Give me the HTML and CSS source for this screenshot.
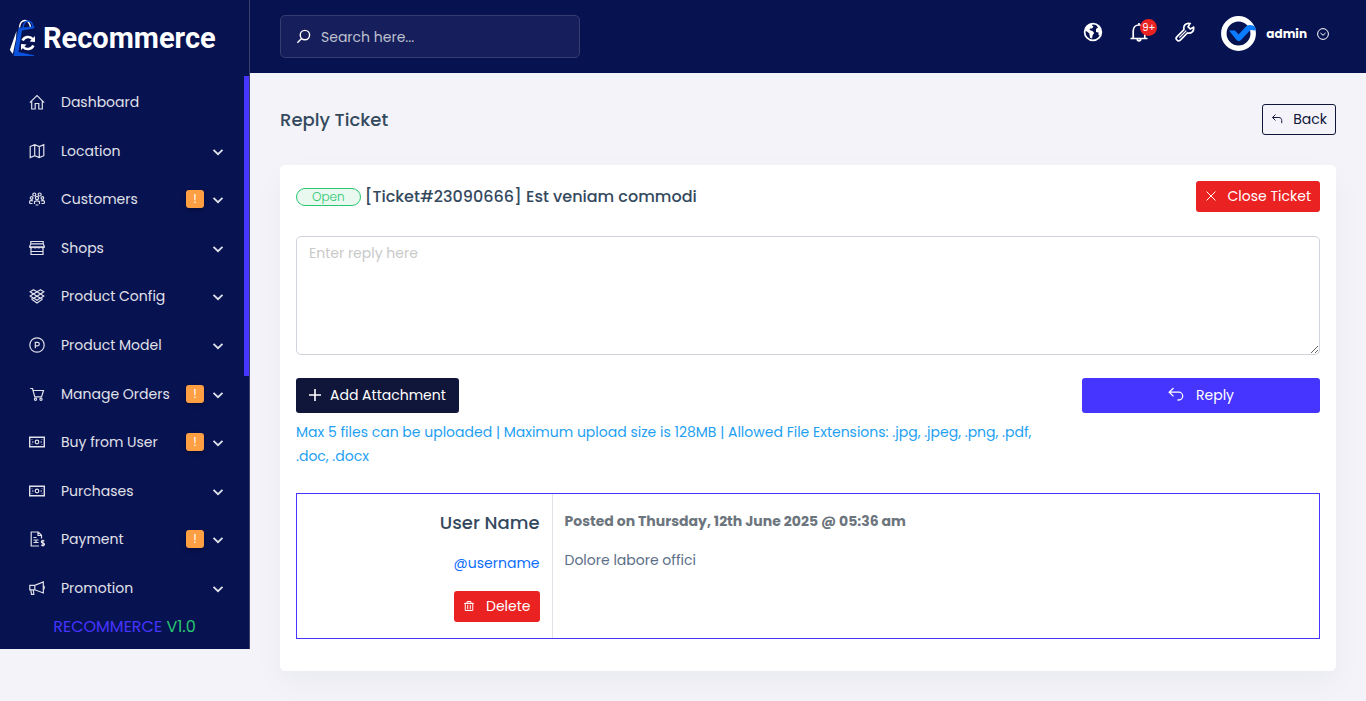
FILE: index.html
```html
<!DOCTYPE html>
<html lang="en">
<head>
    <meta charset="UTF-8">
    <meta name="viewport" content="width=device-width, initial-scale=1.0">
    <title>Recommerce - Reply Ticket</title>
    <link rel="stylesheet" href="styles.css">
</head>
<body>
    <!-- shared icons -->
    <svg class="sprite" aria-hidden="true">
        <symbol id="chevron" viewBox="0 0 12 12"><path d="M1.500 4.800 6 9.200l4.500-4.400" stroke-width="1.800"/></symbol>
        <symbol id="money" viewBox="0 0 16 16"><path d="M.7 3.200h14.600v9.600H.7z" stroke-width="1.400"/><circle cx="8" cy="8" r="1.800"/><path d="M3 5.500v-.6M3 11v-.6M13 5.500v-.6M13 11v-.6M3 8h1.500M11.500 8H13"/></symbol>
        <symbol id="reply" viewBox="0 0 16 16"><path d="M5.500 1 1.200 5.200l4.300 4.200M1.400 5.200h9.400a3.900 3.900 0 0 1 0 7.800H9.500" stroke-width="1.300"/></symbol>
    </svg>

    <div class="page-wrapper">
        <aside class="sidebar">
            <a href="#" class="sidebar-logo">
                <svg width="28" height="38" viewBox="0 0 28 38">
                    <path d="M7.500 12 .8 31l3 4L7 20z" fill="#fff"/>
                    <path d="M10.500 8.500C11 3.500 13.500 1.500 16 1.500s4.500 2 5.500 6.500" fill="none" stroke="#fff" stroke-width="1.400"/>
                    <path d="M14 9c.5-5 2.500-7 5-7s4.500 2 5 6" fill="none" stroke="#0b4fd8" stroke-width="1.500"/>
                    <path d="m9.500 9 16.500-1.800-1.500 2.300L13 11.500 9.500 33 25 36.300v.7H4.500z" fill="#0b52dc"/>
                    <path d="M13.600 21.500c1.800-4 7.400-4.800 10-1.500M24.400 26.500c-1.800 4-7.400 4.800-10 1.500" fill="none" stroke="#fff" stroke-width="2.600"/>
                    <path d="m20.500 22.500 5.500.5v-6zM17.500 25.500 12 25v6z" fill="#fff"/>
                </svg>
                <span>Recommerce</span>
            </a>

            <nav class="sidebar-menu">
                <ul>
                    <li><a href="#" class="menu-link">
                        <svg class="icon" viewBox="0 0 16 16"><path d="M.8 8.700 8 1.500l7.200 7.200M2.700 7v8h3.500V9.500h3.600V15h3.500V7"/></svg>
                        <span>Dashboard</span>
                    </a></li>
                    <li><button class="menu-link">
                        <svg class="icon" viewBox="0 0 16 16"><path d="m1.200 3.500 4.500-1.800 4.600 1.800 4.500-1.800v11l-4.500 1.800-4.600-1.800-4.500 1.800zM5.700 1.700v11M10.300 3.500v11"/></svg>
                        <span>Location</span>
                        <svg class="arrow"><use href="#chevron"/></svg>
                    </button></li>
                    <li><button class="menu-link">
                        <svg class="icon" viewBox="0 0 16 16"><circle cx="5.300" cy="3.500" r="1.500"/><circle cx="10.700" cy="3.500" r="1.500"/><circle cx="8" cy="7" r="1.600"/><circle cx="2.600" cy="7" r="1.300"/><circle cx="13.400" cy="7" r="1.300"/><path d="M5.500 13v-2c0-1.600 5-1.600 5 0v2M6.500 14h3M.6 12.500v-1.700c0-1.200 2-1.600 3.500-.8M15.400 12.500v-1.700c0-1.200-2-1.600-3.500-.8M.8 12.500h2.700M12.500 12.500h2.700"/></svg>
                        <span>Customers</span>
                        <span class="menu-badge">!</span>
                        <svg class="arrow"><use href="#chevron"/></svg>
                    </button></li>
                    <li><button class="menu-link">
                        <svg class="icon" viewBox="0 0 16 16"><path d="M1.800 1.500h12.400v2.300H1.800zM1.800 3.800.5 6.800h15l-1.300-3M.5 6.800c1 1.500 2 1.500 3.700.3 1.500 1.200 2.500 1.200 3.800 0 1.300 1.200 2.300 1.200 3.800 0 1.700 1.200 2.700 1.200 3.700-.3M2 8.500v6h12v-6M2 11.500h12"/></svg>
                        <span>Shops</span>
                        <svg class="arrow"><use href="#chevron"/></svg>
                    </button></li>
                    <li><button class="menu-link">
                        <svg class="icon" viewBox="0 0 16 16"><path d="m4.500 1.800 3.500 2-3.500 2.200-3.300-2.200zM11.500 1.800 8 3.800 11.500 6l3.300-2.200zM4.500 6 8 8.200 4.500 10.300 1.200 8zM11.500 6 8 8.200l3.500 2.100L14.800 8zM3 10.300v1.200l5 3.500 5-3.500v-1.200M5 10.300l3 2 3-2"/></svg>
                        <span>Product Config</span>
                        <svg class="arrow"><use href="#chevron"/></svg>
                    </button></li>
                    <li><button class="menu-link">
                        <svg class="icon" viewBox="0 0 16 16"><circle cx="8" cy="8" r="7.200"/><path d="M6.300 11.200V5.300h2.200a1.700 1.700 0 0 1 0 3.600H6.300"/></svg>
                        <span>Product Model</span>
                        <svg class="arrow"><use href="#chevron"/></svg>
                    </button></li>
                    <li><button class="menu-link">
                        <svg class="icon" viewBox="0 0 16 16"><path d="M1.200 2.500h2.300l2.300 8.400h6.700l2-6.400H4.200"/><circle cx="6.500" cy="13.200" r="1.100"/><circle cx="12" cy="13.200" r="1.100"/></svg>
                        <span>Manage Orders</span>
                        <span class="menu-badge">!</span>
                        <svg class="arrow"><use href="#chevron"/></svg>
                    </button></li>
                    <li><button class="menu-link">
                        <svg class="icon"><use href="#money"/></svg>
                        <span>Buy from User</span>
                        <span class="menu-badge">!</span>
                        <svg class="arrow"><use href="#chevron"/></svg>
                    </button></li>
                    <li><button class="menu-link">
                        <svg class="icon"><use href="#money"/></svg>
                        <span>Purchases</span>
                        <svg class="arrow"><use href="#chevron"/></svg>
                    </button></li>
                    <li><button class="menu-link">
                        <svg class="icon" viewBox="0 0 16 16"><path d="M10 15H2.200V1h7l3.300 3.300v3.200M9 1v3.500h3.500M4.500 6.500h3M4.500 9h5M4.500 11.500h5M7 9v2.500"/><path d="M15.300 10.200c-.8-.9-3-.7-3 .7 0 1.500 3.200.9 3.200 2.400 0 1.300-2.400 1.500-3.300.5M13.900 8.700v6.800"/></svg>
                        <span>Payment</span>
                        <span class="menu-badge">!</span>
                        <svg class="arrow"><use href="#chevron"/></svg>
                    </button></li>
                    <li><button class="menu-link">
                        <svg class="icon" viewBox="0 0 16 16"><path d="M.8 5.300h5L14.300 2v11L5.800 9.800h-5zM5.800 5.300v4.500M14.300 5.500c1.300.5 1.300 3.500 0 4M1.800 9.800l.7 4.500h2.300l-.5-4.500"/></svg>
                        <span>Promotion</span>
                        <svg class="arrow"><use href="#chevron"/></svg>
                    </button></li>
                </ul>
            </nav>

            <div class="version"><span class="name">RECOMMERCE</span> <span class="number">V1.0</span></div>
        </aside>

        <div class="content">
            <header class="topbar">
                <form class="search">
                    <label for="search" title="Search">
                        <svg viewBox="0 0 16 16"><circle cx="9.500" cy="6.500" r="5"/><path d="m6 10.200-4.500 4.500"/></svg>
                    </label>
                    <input type="search" id="search" name="search" placeholder="Search here...">
                </form>
                <div class="topbar-right">
                    <button class="topbar-icon" title="Visit Website">
                        <svg viewBox="0 0 20 20"><circle cx="10" cy="10" r="8.400" stroke-width="1.700"/><path class="solid" d="M2 9c0-4 3-7.500 7.500-7.500l-.5 2 1.500 1-1.500 2H7L6.500 8l3 1 1.700 2-1.500 2-.7 3.500-2-.8-.7-4.200L4 9.500zM13 2.500l4 3 1.500 4-1 4.500-2-1v-2.500L13 10V7l2-1.500z"/></svg>
                    </button>
                    <button class="topbar-icon" title="Notifications">
                        <svg viewBox="0 0 20 20"><path d="M1.500 16.500h17M4.200 16V9c0-3.500 2.500-6 5.800-6s5.800 2.500 5.800 6v7M10 3V1M8.300 17c0 2.500 3.400 2.500 3.400 0" stroke-width="1.700"/></svg>
                        <span class="count">9+</span>
                    </button>
                    <button class="topbar-icon" title="System Setting">
                        <svg viewBox="0 0 20 20"><path d="M18.500 5.200 15.300 7l-2.200-2.200L15 1.500c-4-1-7 2.200-6 6L1.800 14.800c-2 2 1.200 5.400 3.500 3.400L12.400 11c4 1 7-2 6.100-5.800z" stroke-width="1.700"/><path d="m4.300 15.700 7-7" stroke-width="1.200"/></svg>
                    </button>
                    <button class="profile">
                        <svg class="avatar" viewBox="0 0 35 35"><circle cx="17.500" cy="17.500" r="14.700" stroke="#fff" stroke-width="5.500"/><path d="M8 14.500h6l3.500 4 8-8.500c3-1.500 6-1.300 9 1.500v3l-5-.5-9.500 10c-1.500 1.500-3 1.500-4.500 0z" fill="#0a7cff"/></svg>
                        <span>admin</span>
                        <svg class="profile-arrow" viewBox="0 0 12 12"><circle cx="6" cy="6" r="5.400"/><path d="M3.500 5 6 7.300 8.500 5"/></svg>
                    </button>
                </div>
            </header>

            <main>
                <div class="page-title">
                    <h1>Reply Ticket</h1>
                    <a href="#" class="btn btn-sm btn-outline"><svg viewBox="0 0 16 16"><path d="M6 2 2 6l4 4M2 6h8.500c2.500 0 3.800 1.700 3.800 4v3.500"/></svg>Back</a>
                </div>

                <section class="card">
                    <div class="card-top">
                        <h2><span class="status">Open</span>[Ticket#23090666] Est veniam commodi</h2>
                        <button class="btn btn-sm btn-danger"><svg viewBox="0 0 16 16"><path d="m2 2 12 12M14 2 2 14"/></svg>Close Ticket</button>
                    </div>

                    <form class="reply-form">
                        <textarea name="message" aria-label="Reply" placeholder="Enter reply here"></textarea>
                        <div class="attachments">
                            <button type="button" class="btn btn-dark"><svg viewBox="0 0 12 12"><path d="M6 0v12M0 6h12" stroke-width="1.600"/></svg>Add Attachment</button>
                            <p>Max 5 files can be uploaded | Maximum upload size is 128MB | Allowed File Extensions: .jpg, .jpeg, .png, .pdf, .doc, .docx</p>
                        </div>
                        <button type="submit" class="btn btn-primary"><svg><use href="#reply"/></svg>Reply</button>
                    </form>

                    <article class="message">
                        <div class="message-user">
                            <h3>User Name</h3>
                            <a href="#">@username</a>
                            <button class="btn btn-sm btn-danger"><svg viewBox="0 0 16 16"><path d="M3 4.500h10V14H3zM1.500 4.500h13M5.500 4V2h5v2M6.300 6.500v6M9.700 6.500v6"/></svg>Delete</button>
                        </div>
                        <div class="message-body">
                            <p class="posted">Posted on Thursday, 12th June 2025 @ 05:36 am</p>
                            <p>Dolore labore offici</p>
                        </div>
                    </article>
                </section>
            </main>
        </div>
    </div>
</body>
</html>
```
FILE: styles.css
```css
* {
    box-sizing: border-box;
}
body {
    margin: 0;
    background-color: #f3f3f9;
    color: #5b6e88;
    font-family: Poppins, Inter, sans-serif;
    font-size: 14px;
    line-height: 24px;
}
h1, h2, h3, p, ul {
    margin: 0;
    padding: 0;
}
h1, h2, h3 {
    color: #34495e;
    font-weight: 500;
}
a {
    text-decoration: none;
}
button, input, textarea {
    font: inherit;
}
button {
    cursor: pointer;
}
svg {
    display: block;
    flex-shrink: 0;
    fill: none;
    stroke: currentColor;
}
.sprite {
    position: absolute;
    width: 0;
    height: 0;
}
.page-wrapper {
    display: flex;
    align-items: flex-start;
    min-height: 100vh;
}

/* sidebar */
.sidebar {
    display: flex;
    flex-direction: column;
    flex: 0 0 250px;
    min-height: calc(100vh - 52px);
    background-color: #071251;
    border-right: 1px solid #3b4167;
}
.sidebar-logo {
    display: flex;
    align-items: center;
    gap: 6px;
    height: 76px;
    padding-left: 9px;
    color: #fff;
    font-family: Roboto, sans-serif;
    font-size: 29px;
    font-weight: 700;
}
.sidebar-logo svg {
    stroke: none;
}
.sidebar-menu {
    position: relative;
    display: flex;
    flex: 1;
}
.sidebar-menu::after {
    content: "";
    position: absolute;
    top: 0;
    right: 0;
    width: 5px;
    height: 56%;
    background-color: #4634ff;
}
.sidebar-menu ul {
    display: grid;
    grid-auto-rows: 1fr;
    flex: 1;
    padding-top: 2px;
    list-style: none;
}
.sidebar-menu li {
    display: flex;
}
.menu-link {
    display: flex;
    align-items: center;
    flex: 1;
    padding: 0 25px 0 29px;
    border: 0;
    background: none;
    color: #e0e1e9;
    font-size: 14px;
    text-align: left;
}
.menu-link .icon {
    width: 16px;
    height: 16px;
    margin-right: 16px;
    stroke-width: 1.2;
}
.menu-link .arrow {
    width: 12px;
    height: 12px;
    margin-left: auto;
}
.menu-badge {
    width: 18px;
    height: 18px;
    margin-left: auto;
    border-radius: 3px;
    background-color: #ff9f43;
    color: #fff;
    font-size: 12px;
    line-height: 18px;
    text-align: center;
    box-shadow: 0 2px 4px rgba(0,0,0,0.3);
}
.menu-badge + .arrow {
    margin-left: 8px;
}
.version {
    height: 37px;
    padding-top: 3px;
    font-size: 16px;
    text-align: center;
}
.version .name {
    color: #4634ff;
}
.version .number {
    color: #28c76f;
}

/* top bar */
.content {
    flex: 1;
    min-width: 0;
}
.topbar {
    display: flex;
    align-items: flex-start;
    justify-content: space-between;
    height: 73px;
    padding: 15px 37px 0 30px;
    background-color: #071251;
}
.search {
    display: flex;
    align-items: center;
    width: 300px;
    height: 43px;
    padding-left: 15px;
    border: 1px solid #343c70;
    border-radius: 5px;
    background-color: #161f5b;
    color: #fff;
}
.search svg {
    width: 15px;
    height: 15px;
    stroke-width: 1.5;
}
.search input {
    flex: 1;
    min-width: 0;
    padding: 0 10px;
    border: 0;
    outline: 0;
    background: none;
    color: #fff;
}
.search input::placeholder {
    color: #bfc1cf;
}
.topbar-right {
    display: flex;
    align-items: center;
    gap: 26px;
}
.topbar-icon {
    position: relative;
    margin-bottom: 4px;
    padding: 0;
    border: 0;
    background: none;
    color: #fff;
}
.topbar-icon svg {
    width: 20px;
    height: 20px;
}
.solid {
    fill: currentColor;
    stroke: none;
}
.count {
    position: absolute;
    top: -3px;
    left: 11px;
    width: 17px;
    height: 17px;
    border-radius: 50%;
    background-color: #eb2222;
    font-size: 10px;
    line-height: 17px;
    text-align: center;
}
.profile {
    display: flex;
    align-items: center;
    gap: 10px;
    padding: 1px 0;
    border: 0;
    background: none;
    color: #fff;
    font-size: 12px;
    font-weight: 700;
}
.avatar {
    width: 35px;
    height: 35px;
    stroke: none;
}
.profile-arrow {
    width: 12px;
    height: 12px;
}

/* page */
main {
    padding: 31px 30px 30px;
}
.page-title {
    display: flex;
    align-items: center;
    justify-content: space-between;
    margin-bottom: 30px;
}
.page-title h1 {
    font-size: 18px;
}
.btn {
    display: flex;
    align-items: center;
    justify-content: center;
    gap: 9px;
    height: 35px;
    padding: 0 12px 2px;
    border: 1px solid transparent;
    border-radius: 3px;
    color: #fff;
    white-space: nowrap;
}
.btn svg {
    width: 12px;
    height: 12px;
    stroke-width: 1.3;
}
.btn-sm {
    gap: 10px;
    height: 31px;
    padding: 0 8px 2px;
}
.btn-outline {
    border-color: #10163a;
    color: #10163a;
}
.btn-danger {
    gap: 11px;
    background-color: #eb2222;
}
.btn-dark {
    background-color: #10163a;
}
.btn-primary {
    gap: 12px;
    background-color: #4634ff;
}
.btn-primary svg {
    width: 16px;
    height: 16px;
}
.card {
    padding: 16px 16px 32px;
    border-radius: 5px;
    background-color: #fff;
    box-shadow: 0 12px 30px rgba(18,38,63,0.04);
}
.card-top {
    display: flex;
    align-items: center;
    justify-content: space-between;
    margin-bottom: 24px;
}
.card-top h2 {
    display: flex;
    align-items: center;
    gap: 4px;
    font-size: 16px;
}
.status {
    padding: 0 15px;
    border: 1px solid #28c76f;
    border-radius: 9px;
    background-color: #e9f9f0;
    color: #28c76f;
    font-size: 12px;
    font-weight: 300;
    line-height: 16px;
}
.reply-form {
    display: grid;
    grid-template-columns: repeat(4, 1fr);
    align-items: start;
    gap: 23px 24px;
    margin-bottom: 25px;
}
.reply-form textarea {
    grid-column: 1 / -1;
    height: 119px;
    padding: 4px 12px;
    border: 1px solid #ced4da;
    border-radius: 5px;
    outline: 0;
    color: #5b6e88;
    resize: vertical;
}
.reply-form textarea::placeholder {
    color: #c9c9c9;
}
.attachments {
    grid-column: span 3;
}
.attachments p {
    margin-top: 7px;
    color: #1e9ff2;
}
.message {
    display: grid;
    grid-template-columns: 1fr 3fr;
    border: 1px solid #4634ff;
}
.message-user {
    display: flex;
    flex-direction: column;
    align-items: flex-end;
    gap: 16px;
    padding: 16px 12px;
    border-right: 1px solid #dee2e6;
}
.message-user h3 {
    font-size: 18px;
    line-height: 25px;
}
.message-user a {
    color: #0d6efd;
}
.message-body {
    padding: 16px 12px;
}
.message-body .posted {
    margin-bottom: 16px;
    color: #6c757d;
    font-weight: 700;
    line-height: 22px;
}
```
